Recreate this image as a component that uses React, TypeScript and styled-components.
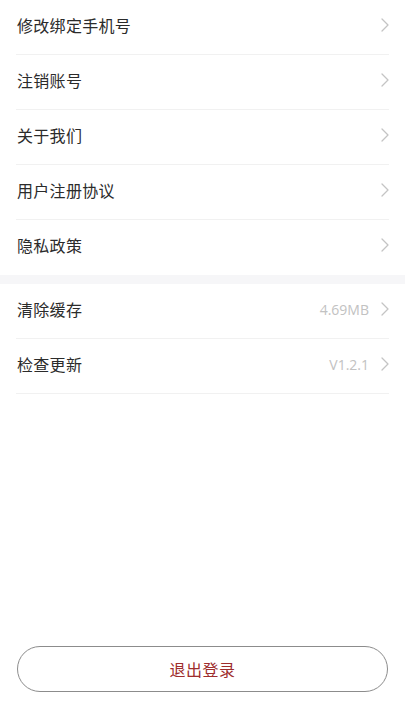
import React from 'react';
import styled, { createGlobalStyle } from 'styled-components';

const GlobalStyle = createGlobalStyle`
  html, body {
    margin: 0;
    padding: 0;
    background: #ffffff;
  }
  body {
    font-family: "Noto Sans CJK SC", "Noto Sans", sans-serif;
  }
`;

const Page = styled.div`
  width: 405px;
  height: 720px;
  display: flex;
  flex-direction: column;
  background: #ffffff;
  overflow: hidden;
`;

const Group = styled.div`
  padding: 0 16px;
`;

const GroupGap = styled.div`
  height: 9px;
  background: #f6f6f8;
`;

const Row = styled.div<{ $last?: boolean }>`
  height: 55px;
  display: flex;
  align-items: center;
  padding: 0 0 4px 1px;
  box-sizing: border-box;
  border-bottom: 1px solid ${(p) => (p.$last ? 'transparent' : '#f1f1f1')};
`;

const Label = styled.span`
  flex: 1;
  font-size: 16px;
  color: #2b2b2b;
  letter-spacing: 0.3px;
`;

const Value = styled.span`
  font-family: "Open Sans", "Noto Sans", sans-serif;
  font-size: 14px;
  color: #c2c2c2;
  margin-right: 12px;
`;

const Chevron = () => (
  <svg width="8" height="14" viewBox="0 0 8 14" fill="none">
    <path d="M1 1l6 6-6 6" stroke="#c4c4c4" strokeWidth="1.3" strokeLinecap="round" strokeLinejoin="round" />
  </svg>
);

const Spacer = styled.div`
  flex: 1;
`;

const Footer = styled.div`
  padding: 0 17px 28px;
`;

const LogoutButton = styled.button`
  width: 100%;
  height: 46px;
  border: 1px solid #8c8c8c;
  border-radius: 23px;
  background: #ffffff;
  color: #9e2d2d;
  font-family: "Noto Sans CJK SC", sans-serif;
  font-size: 16px;
  letter-spacing: 0.5px;
  cursor: pointer;
`;

const accountItems = ['修改绑定手机号', '注销账号', '关于我们', '用户注册协议', '隐私政策'];
const systemItems = [
  { label: '清除缓存', value: '4.69MB' },
  { label: '检查更新', value: 'V1.2.1' },
];

export default function App() {
  return (
    <>
      <GlobalStyle />
      <Page>
        <Group>
          {accountItems.map((item, i) => (
            <Row key={item} $last={i === accountItems.length - 1}>
              <Label>{item}</Label>
              <Chevron />
            </Row>
          ))}
        </Group>
        <GroupGap />
        <Group>
          {systemItems.map((item) => (
            <Row key={item.label}>
              <Label>{item.label}</Label>
              <Value>{item.value}</Value>
              <Chevron />
            </Row>
          ))}
        </Group>
        <Spacer />
        <Footer>
          <LogoutButton>退出登录</LogoutButton>
        </Footer>
      </Page>
    </>
  );
}
